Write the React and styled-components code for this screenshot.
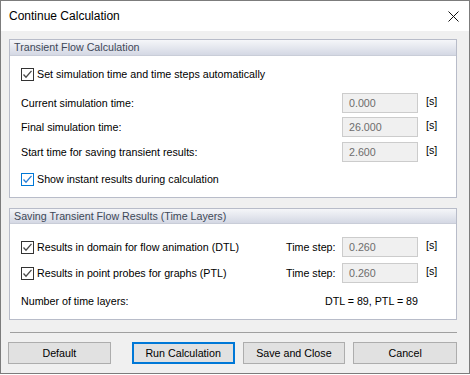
import React from 'react'
import styled, { createGlobalStyle } from 'styled-components'

const GlobalStyle = createGlobalStyle`
  body {
    margin: 0;
    background: #ffffff;
  }
  * {
    box-sizing: border-box;
  }
`

const Window = styled.div`
  width: 470px;
  height: 374px;
  border: 1px solid #7c7c7c;
  background: #f0f0f0;
  display: flex;
  flex-direction: column;
  font-family: "Liberation Sans", Arial, sans-serif;
  font-size: 10.7px;
  color: #000;
`

const TitleBar = styled.div`
  height: 30px;
  background: #ffffff;
  display: flex;
  align-items: center;
  justify-content: space-between;
  padding: 0 10px 0 8px;
  font-size: 12px;
`

const Body = styled.div`
  flex: 1;
  display: flex;
  flex-direction: column;
  padding: 8px 12px 0 8px;
`

const Group = styled.div`
  border: 1px solid #b8bcc9;
  background: #ffffff;
  margin-bottom: ${p => p.$mb || 0}px;
  padding-bottom: ${p => p.$pb || 0}px;
`

const GroupHeader = styled.div`
  height: ${p => p.$h || 16}px;
  line-height: ${p => (p.$h || 16) - 1}px;
  padding-left: 4px;
  color: #3e4858;
  background: linear-gradient(#f5f6f9, #d4d8e4);
  border-bottom: 1px solid #c9cdd8;
`

const Row = styled.div`
  display: flex;
  align-items: center;
  height: 20px;
  margin-top: ${p => p.$mt || 0}px;
  padding-left: 11px;
`

const Label = styled.span`
  flex: 1;
  white-space: nowrap;
`

const StepLabel = styled.span`
  width: 56px;
  white-space: nowrap;
`

const Field = styled.div`
  width: 76px;
  height: 20px;
  border: 1px solid #cccccc;
  background: #f0f0f0;
  color: #6d6d6d;
  padding-left: 6px;
  display: flex;
  align-items: center;
`

const Unit = styled.span`
  width: 38px;
  padding-left: 8px;
  align-self: flex-start;
  padding-top: 2px;
`

const Summary = styled.span`
  white-space: nowrap;
  text-align: right;
  margin-right: 38px;
`

const CheckLabel = styled.label`
  display: flex;
  align-items: center;
  gap: 3px;
  white-space: nowrap;
  flex: ${p => (p.$grow ? 1 : 'none')};
`

const Box = styled.span`
  width: 13px;
  height: 13px;
  border: 1px solid ${p => (p.$focus ? '#0078d7' : '#333333')};
  background: #ffffff;
  display: inline-flex;
  align-items: center;
  justify-content: center;
`

const Separator = styled.div`
  height: 1px;
  background: #a0a0a0;
  margin: 12px 0 0 1px;
`

const ButtonBar = styled.div`
  display: flex;
  margin-top: 9px;
  margin-left: -1px;
`

const Button = styled.div`
  width: ${p => p.$w || 103}px;
  height: 22px;
  margin-left: ${p => p.$ml || 0}px;
  border: ${p => (p.$primary ? '2px solid #0078d7' : '1px solid #adadad')};
  background: #e1e1e1;
  display: flex;
  align-items: center;
  justify-content: center;
`

const Check = ({ focus }) => (
  <Box $focus={focus}>
    <svg width="11" height="11" viewBox="0 0 11 11">
      <path
        d="M1.5 5.5 L4 8.2 L9.5 1.8"
        fill="none"
        stroke={focus ? '#2a7fd4' : '#4a4a4a'}
        strokeWidth="1.3"
      />
    </svg>
  </Box>
)

const CloseIcon = () => (
  <svg width="11" height="11" viewBox="0 0 11 11">
    <path d="M0.5 0.5 L10.5 10.5 M10.5 0.5 L0.5 10.5" stroke="#111" strokeWidth="1" />
  </svg>
)

const fields = [
  { label: 'Current simulation time:', value: '0.000', mt: 9 },
  { label: 'Final simulation time:', value: '26.000', mt: 4 },
  { label: 'Start time for saving transient results:', value: '2.600', mt: 5 },
]

const App = () => (
  <>
    <GlobalStyle />
    <Window>
      <TitleBar>
        <span>Continue Calculation</span>
        <CloseIcon />
      </TitleBar>
      <Body>
        <Group $mb={10} $pb={8}>
          <GroupHeader>Transient Flow Calculation</GroupHeader>
          <Row $mt={8}>
            <CheckLabel>
              <Check />
              Set simulation time and time steps automatically
            </CheckLabel>
          </Row>
          {fields.map(f => (
            <Row key={f.label} $mt={f.mt}>
              <Label>{f.label}</Label>
              <Field>{f.value}</Field>
              <Unit>[s]</Unit>
            </Row>
          ))}
          <Row $mt={7}>
            <CheckLabel>
              <Check focus />
              Show instant results during calculation
            </CheckLabel>
          </Row>
        </Group>
        <Group $pb={8}>
          <GroupHeader $h={15}>Saving Transient Flow Results (Time Layers)</GroupHeader>
          <Row $mt={13}>
            <CheckLabel $grow>
              <Check />
              Results in domain for flow animation (DTL)
            </CheckLabel>
            <StepLabel>Time step:</StepLabel>
            <Field>0.260</Field>
            <Unit>[s]</Unit>
          </Row>
          <Row $mt={6}>
            <CheckLabel $grow>
              <Check />
              Results in point probes for graphs (PTL)
            </CheckLabel>
            <StepLabel>Time step:</StepLabel>
            <Field>0.260</Field>
            <Unit>[s]</Unit>
          </Row>
          <Row $mt={8}>
            <Label>Number of time layers:</Label>
            <Summary>DTL = 89, PTL = 89</Summary>
          </Row>
        </Group>
        <Separator />
        <ButtonBar>
          <Button>Default</Button>
          <Button $ml={21} $primary>Run Calculation</Button>
          <Button $ml={8}>Save and Close</Button>
          <Button $ml={8} $w={104}>Cancel</Button>
        </ButtonBar>
      </Body>
    </Window>
  </>
)

export default App
